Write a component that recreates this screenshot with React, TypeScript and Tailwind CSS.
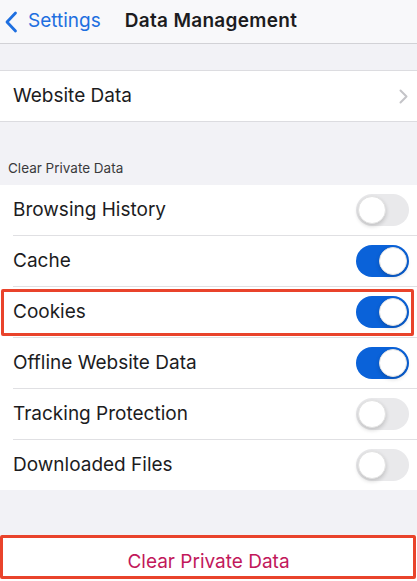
import React from "react";

type Row = { label: string; on: boolean; marked?: boolean };

const rows: Row[] = [
  { label: "Browsing History", on: false },
  { label: "Cache", on: true },
  { label: "Cookies", on: true, marked: true },
  { label: "Offline Website Data", on: true },
  { label: "Tracking Protection", on: false },
  { label: "Downloaded Files", on: false },
];

function Toggle({ on }: { on: boolean }) {
  return (
    <div
      className={
        on
          ? "w-[53px] h-[32px] rounded-full bg-[#0a62d9] flex items-center justify-end px-[2px]"
          : "w-[53px] h-[32px] rounded-full bg-[#e9e9eb] flex items-center justify-start px-[2px]"
      }
    >
      <div className="w-[28px] h-[28px] rounded-full bg-white shadow-[0_2px_4px_rgba(0,0,0,0.18)] border border-[#e2e2e2]" />
    </div>
  );
}

export default function App() {
  return (
    <div
      className="w-[417px] h-[581px] bg-[#f2f2f6] flex flex-col overflow-hidden text-[#1c1c1e]"
      style={{ fontFamily: "Inter, 'Liberation Sans', sans-serif" }}
    >
      {/* nav bar */}
      <div className="h-[44px] bg-[#f8f8fa] border-b border-[#d2d2d6] flex items-center">
        <svg width="14" height="22" viewBox="0 0 14 22" className="ml-[4px]">
          <path d="M11.5 2 L3 11 L11.5 20" fill="none" stroke="#1e6fe0" strokeWidth="2.8" strokeLinecap="round" strokeLinejoin="round" />
        </svg>
        <span className="ml-[10px] text-[19px] text-[#1e6fe0]">Settings</span>
        <span className="ml-[24px] text-[19px] font-semibold tracking-[0.3px] text-[#1c1c1e]">Data Management</span>
      </div>

      <div className="h-[26px]" />

      <div className="h-[52px] bg-white border-y border-[#dcdce0] flex items-center justify-between pl-[13px] pr-[9px]">
        <span className="text-[19px]">Website Data</span>
        <svg width="9" height="15" viewBox="0 0 9 15">
          <path d="M1.5 1.5 L7.5 7.5 L1.5 13.5" fill="none" stroke="#c4c4c8" strokeWidth="2" strokeLinecap="round" strokeLinejoin="round" />
        </svg>
      </div>

      <div className="h-[63px] flex items-end pl-[8px] pb-[7px]">
        <span className="text-[13.5px] text-[#3a3a3c]">Clear Private Data</span>
      </div>

      <div className="bg-white">
        {rows.map((r, i) => (
          <div key={r.label} className="relative pl-[13px]">
            <div
              className={
                i < rows.length - 1
                  ? "h-[51px] flex items-center justify-between pr-[8px] border-b border-[#e0e0e3]"
                  : "h-[50px] flex items-center justify-between pr-[8px]"
              }
            >
              <span className="text-[19px]">{r.label}</span>
              <Toggle on={r.on} />
            </div>
            {r.marked && (
              <div className="absolute left-[1px] right-[3px] top-[2px] bottom-[2px] border-[3px] border-[#e9432b] rounded-[2px]" />
            )}
          </div>
        ))}
      </div>

      <div className="h-[45px]" />

      <div className="relative flex-1 bg-white flex items-center justify-center pt-[8px]">
        <span className="text-[19px] text-[#c2185b]">Clear Private Data</span>
        <div className="absolute left-0 right-[1px] top-0 bottom-[2px] border-[3px] border-[#e9432b] rounded-[2px]" />
      </div>
    </div>
  );
}
